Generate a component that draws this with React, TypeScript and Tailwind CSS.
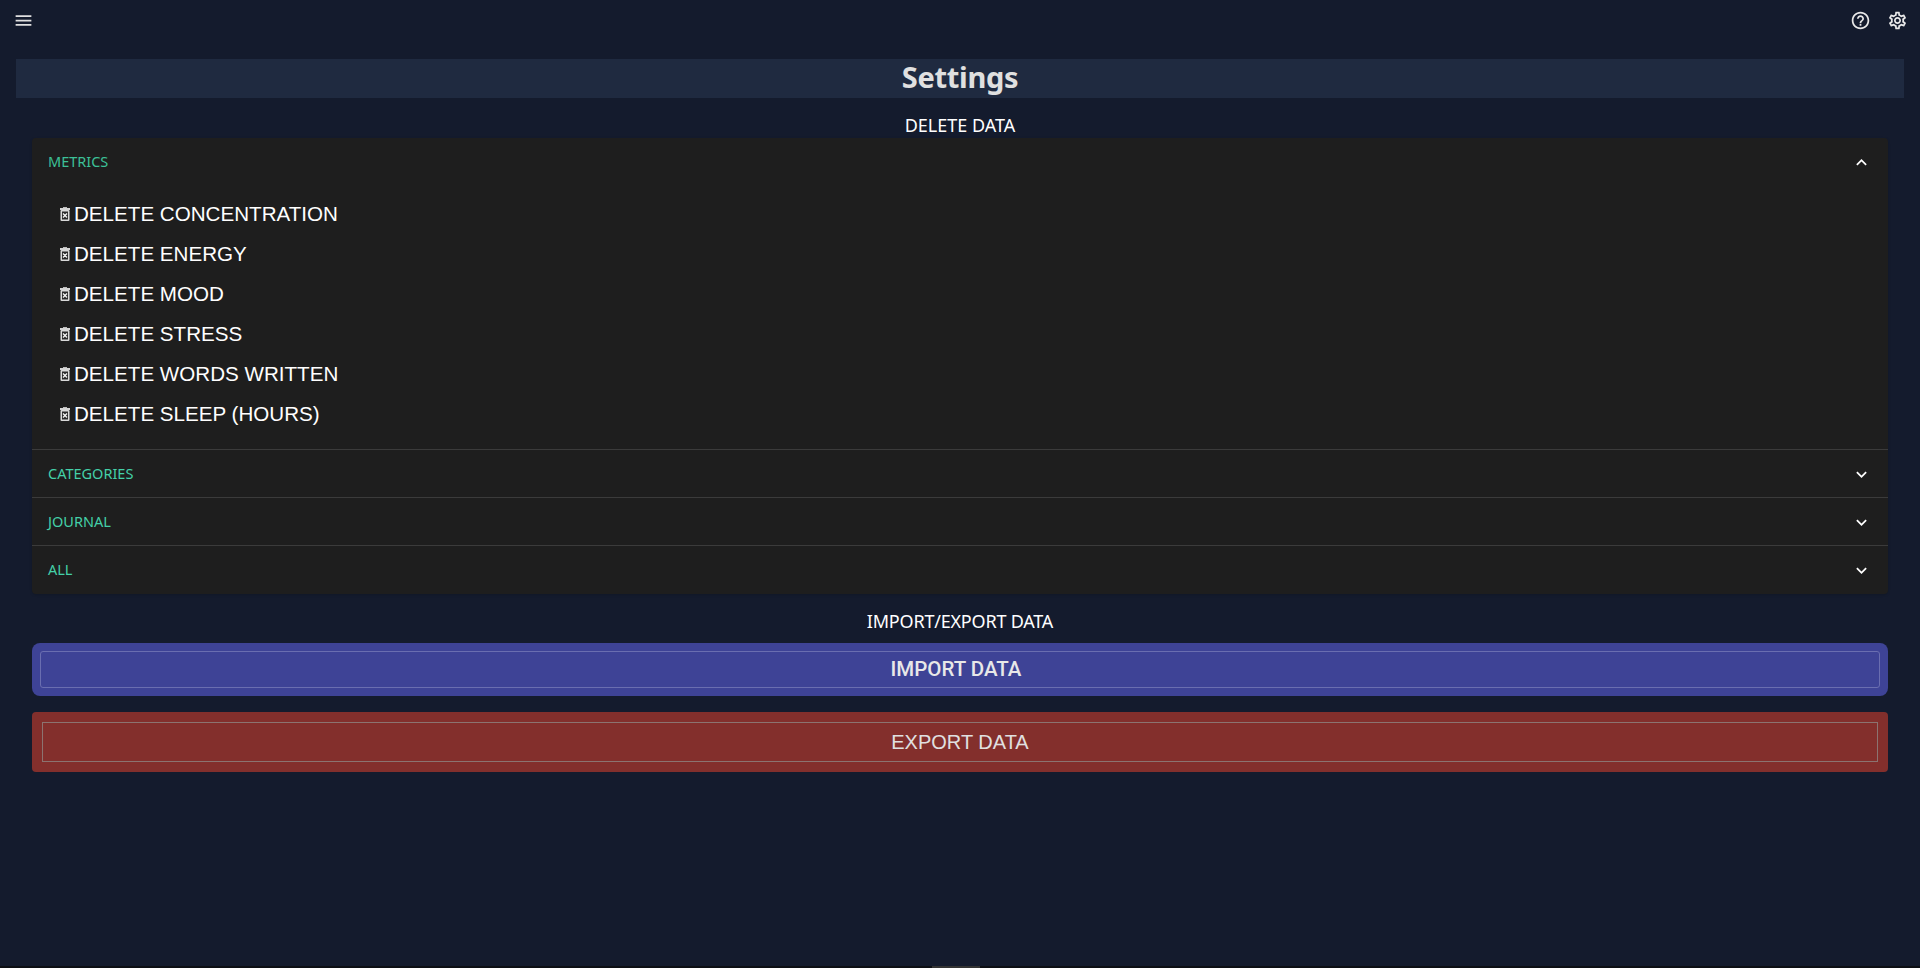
import React from 'react';
import { MdExpandLess, MdExpandMore, MdHelpOutline, MdMenu, MdOutlineSettings } from 'react-icons/md';

const metrics = ['CONCENTRATION', 'ENERGY', 'MOOD', 'STRESS', 'WORDS WRITTEN', 'SLEEP (HOURS)'];

const TrashIcon = () => (
    <svg width="10" height="14" viewBox="0 0 10 14" className="shrink-0">
        <rect x="3" y="0" width="4" height="1" fill="#bdbdbd" />
        <rect x="0" y="1" width="10" height="2" fill="#d6d6d6" />
        <rect x="0.5" y="3" width="9" height="11" rx="1" fill="#d9d9d9" />
        <rect x="2" y="4.5" width="6" height="8" fill="#2a2a2a" />
        <path d="M3 6.5l4 4M7 6.5l-4 4" stroke="#f2f2f2" strokeWidth="1.4" />
    </svg>
);

const AccordionRow = ({ label }: { label: string }) => (
    <div className="flex h-12 items-center justify-between border-t border-[#3b3b3b] pl-4 pr-4 pt-px">
        <span className="text-[14.5px] text-[#44d0a8]">{label}</span>
        <MdExpandMore size={21} className="text-white" />
    </div>
);

export default function App() {
    return (
        <div className="flex h-[968px] flex-col overflow-hidden bg-[#141b2d] font-['Noto_Sans',sans-serif] text-white">
            {/* TOP BAR */}
            <div className="flex h-[41px] items-center justify-between pl-[13px] pr-[12px]">
                <MdMenu size={21} className="text-[#e0e0e0]" />
                <div className="flex items-center gap-4">
                    <MdHelpOutline size={21} className="text-[#e8e8e8]" />
                    <MdOutlineSettings size={21} className="text-[#e8e8e8]" />
                </div>
            </div>

            <div className="flex-1 px-4 pt-[18px]">
                <h1 className="flex h-[39px] items-center justify-center bg-[#1f2a40] pb-[4px] text-[29px] font-bold tracking-[-0.3px] text-[#e0e0e0]">
                    Settings
                </h1>

                <div className="px-4">
                    <h2 className="flex h-[40px] items-center justify-center pt-[14px] text-[18px] text-white">
                        DELETE DATA
                    </h2>

                    {/* ACCORDION */}
                    <div className="rounded-[4px] bg-[#1e1e1e] pb-px shadow-sm">
                        <div className="flex h-12 items-center justify-between pl-4 pr-4">
                            <span className="pb-px text-[14.5px] text-[#3cc097]">METRICS</span>
                            <MdExpandLess size={21} className="text-white" />
                        </div>
                        <div className="flex h-[263px] flex-col pl-7 pt-[8px] font-['Liberation_Sans',sans-serif]">
                            {metrics.map((metric) => (
                                <div key={metric} className="flex h-10 items-center text-[20.6px] text-white">
                                    <TrashIcon />
                                    <span className="ml-[4px]">DELETE {metric}</span>
                                </div>
                            ))}
                        </div>
                        <AccordionRow label="CATEGORIES" />
                        <AccordionRow label="JOURNAL" />
                        <AccordionRow label="ALL" />
                    </div>

                    <h2 className="flex h-[49px] items-center justify-center pt-[6px] text-[18px] tracking-[-0.2px] text-white">
                        IMPORT/EXPORT DATA
                    </h2>

                    {/* BUTTONS */}
                    <div className="rounded-lg bg-[#3e4396] p-2">
                        <div className="flex h-[37px] items-center justify-center rounded-[3px] border border-[#6a6eb0] pr-[8px] font-['Roboto',sans-serif] text-[20.5px] font-medium text-[#e8e8e8]">
                            IMPORT DATA
                        </div>
                    </div>
                    <div className="mt-4 rounded-[4px] bg-[#832f2c] p-[10px]">
                        <div className="flex h-10 items-center justify-center border border-[#8c7370] font-['Liberation_Sans',sans-serif] text-[20px] text-[#e0e0e0]">
                            EXPORT DATA
                        </div>
                    </div>
                </div>
            </div>

            {/* BOTTOM EDGE */}
            <div className="flex h-[2px] justify-center bg-[#0d0f14]">
                <div className="ml-[-8px] w-12 bg-[#333333]" />
            </div>
        </div>
    );
}
